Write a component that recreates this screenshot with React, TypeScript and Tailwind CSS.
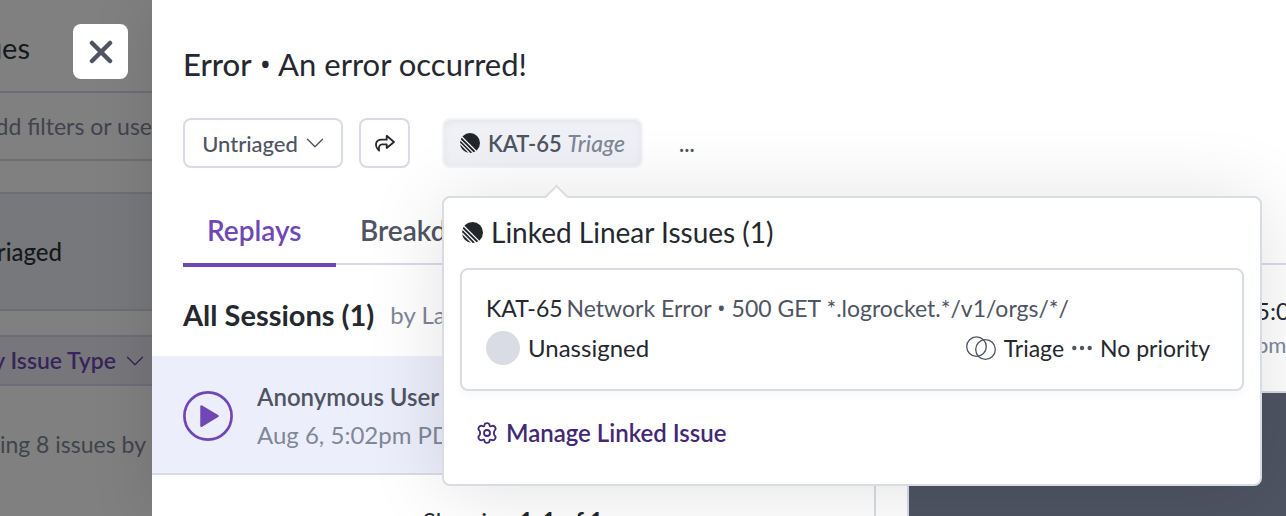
import type { ReactNode } from "react";

const LINKED_ISSUES = [
  {
    key: "KAT-65",
    kind: "Network Error",
    request: "500 GET *.logrocket.*/v1/orgs/*/",
    assignee: "Unassigned",
    status: "Triage",
    priority: "No priority",
  },
];

function LinearLogo({ className }: { className?: string }) {
  return (
    <svg viewBox="0 0 20 20" className={className} fill="none">
      <circle cx="10" cy="10" r="10" fill="#222529" />
      <path d="m2 4 14 14M.2 6.6 13.400 19.800M0 10.5 9.500 20" stroke="white" strokeWidth={1.2} />
    </svg>
  );
}

function ChevronDown({ className }: { className?: string }) {
  return (
    <svg viewBox="0 0 18 12" className={className} fill="none" stroke="currentColor" strokeWidth={1.4} strokeLinecap="round" strokeLinejoin="round">
      <path d="M1.5 2.2 9 9.8l7.5-7.6" />
    </svg>
  );
}

function ShareArrow() {
  return (
    <svg viewBox="0 0 22 20" className="h-5 w-[22px]" fill="none" stroke="currentColor" strokeWidth={1.8} strokeLinecap="round" strokeLinejoin="round">
      <path d="M12.7 2.8 20 9l-7.3 6v-3.6H8.5c-3 0-4.2 2.4-3.400 6.300C.3 13.2 1 6.7 7.8 6.7h4.9V2.8Z" />
    </svg>
  );
}

function PlayCircle() {
  return (
    <svg viewBox="0 0 50 50" className="size-[50px]" fill="none">
      <circle cx="25" cy="25" r="23.6" stroke="currentColor" strokeWidth={2.7} />
      <path d="M18.5 15.5 34.5 25l-16 9.8Z" fill="currentColor" stroke="currentColor" strokeWidth={2.5} strokeLinejoin="round" />
    </svg>
  );
}

function StatusRings() {
  return (
    <svg viewBox="0 0 30 24" className="h-6 w-[30px] shrink-0" fill="none" stroke="#4f5463" strokeWidth={1.3}>
      <circle cx="10.5" cy="10.6" r="9.8" />
      <circle cx="19.5" cy="13.5" r="9.8" />
    </svg>
  );
}

function Gear() {
  return (
    <svg viewBox="0 0 22 22" className="size-[22px] shrink-0" fill="none" stroke="currentColor" strokeWidth={1.8} strokeLinejoin="round">
      <path d="M8.4 3.2C8.6 1.7 9.6 1.2 11 1.2s2.4.5 2.6 2l.2.9q.9.5 1.8-.1c1.4-.6 2.5-.3 3.4 1s.9 2.3-.2 3.3q-1 .9-.9 2.7-.1 1.8.9 2.7c1.1 1 1.1 2 .2 3.3s-2 1.6-3.4 1q-.9-.6-1.8-.1l-.2.9c-.2 1.5-1.2 2-2.6 2s-2.4-.5-2.6-2l-.2-.9q-.9-.5-1.8.1c-1.4.6-2.5.3-3.4-1s-.9-2.3.2-3.3q1-.9.9-2.7.1-1.8-.9-2.7C2.1 7.3 2.1 6.3 3 5s2-1.6 3.4-1q.9.6 1.8.1Z" />
      <circle cx="11" cy="11" r="3" />
    </svg>
  );
}

// Lato's own bullet is oversized
function Bullet() {
  return <span className="font-['Open_Sans']">•</span>;
}

function Sidebar() {
  return (
    <aside className="flex w-[152px] shrink-0 flex-col overflow-hidden bg-[#808080] whitespace-nowrap text-[#16181c]">
      <div className="flex h-[93px] shrink-0 border-b-2 border-[#6d6e73]">
        <h2 className="mt-[30px] flex w-[30px] justify-end text-[29px] leading-9">Issues</h2>
        <button aria-label="Close" className="relative z-20 mt-6 ml-[43px] flex size-[55px] items-center justify-center rounded-lg bg-white text-[#4f5463]">
          <svg viewBox="0 0 24 24" className="size-6" stroke="currentColor" strokeWidth={4.5} strokeLinecap="round">
            <path d="m3 3 18 18M21 3 3 21" />
          </svg>
        </button>
      </div>
      <div className="flex h-[68px] shrink-0 items-center justify-end border-b-2 border-[#6d6e73] text-[23px] text-[#40444d]">Add filters or use</div>
      <div className="mt-[31px] flex h-[119px] shrink-0 items-center border-y-2 border-[#6d6e73] bg-[#77787b]">
        <span className="flex w-[62px] justify-end text-2xl font-medium">Untriaged</span>
      </div>
      <div className="mt-6 flex h-[51px] shrink-0 items-center justify-end gap-2.5 border-y-2 border-[#6d6c7a] bg-[#77777b] pr-2 text-[23px] font-semibold text-[#38245a]">
        by Issue Type
        <ChevronDown className="h-3 w-[18px] shrink-0" />
      </div>
      <p className="mt-10 flex justify-end pr-1.5 text-[23px] leading-9 text-[#40444d]">Showing 8 issues by</p>
    </aside>
  );
}

function ActionButton({ label, className, children }: { label?: string; className: string; children: ReactNode }) {
  return (
    <button aria-label={label} className={`flex h-[50px] items-center justify-center rounded-lg border-2 ${className}`}>
      {children}
    </button>
  );
}

function LinkedIssuesPopover() {
  return (
    <section className="absolute top-full left-0 z-10 mt-7 w-[820px] rounded-lg border-2 border-[#d9dce5] bg-white px-4 pt-4 pb-[33px] text-[#25282f] shadow-[0_4px_80px_rgba(0,0,0,0.12)]">
      <span className="absolute -top-[10px] left-[104px] size-[17px] rotate-45 border-t-2 border-l-2 border-[#d9dce5] bg-white" />
      <h3 className="flex items-center gap-2 pl-0.5 text-[28px] leading-9">
        <LinearLogo className="size-[21px]" />
        Linked Linear Issues (1)
      </h3>
      {LINKED_ISSUES.map((issue) => (
        <article key={issue.key} className="mt-[18px] rounded-lg border-2 border-[#d9dce5] px-6 pt-5 pb-[23px] text-2xl leading-9 shadow-[0_4px_8px_rgba(0,0,0,0.03)]">
          <p className="flex gap-1 text-[23px]">
            <span>{issue.key}</span>
            <span className="text-[#4f5463]">{issue.kind} <Bullet /> {issue.request}</span>
          </p>
          <div className="mt-1 flex items-center gap-2 pr-2">
            <span className="size-[34px] rounded-full bg-[#d9dce5]" />
            {issue.assignee}
            <span className="ml-auto flex items-center gap-2 text-[23px]">
              <StatusRings />
              {issue.status}
              <svg viewBox="0 0 20 6" className="h-1.5 w-5" fill="#4f5463">
                <circle cx="2.3" cy="3" r="2.2" />
                <circle cx="10" cy="3" r="2.2" />
                <circle cx="17.7" cy="3" r="2.2" />
              </svg>
              {issue.priority}
            </span>
          </div>
        </article>
      ))}
      <button className="mt-6 ml-4 flex items-center gap-2 text-2xl leading-9 font-semibold text-[#432874]">
        <Gear />
        Manage Linked Issue
      </button>
    </section>
  );
}

export default function App() {
  return (
    <div className="flex h-screen overflow-hidden font-[Lato,sans-serif]">
      <Sidebar />
      <main className="relative z-10 flex min-w-0 flex-1 flex-col bg-white text-[#25282f] shadow-[0_0_60px_rgba(0,0,0,0.12)]">
        <header className="pt-11 pl-[31px]">
          <h1 className="text-[31px] leading-10"><span className="font-medium">Error</span> <Bullet /> An error occurred!</h1>
          <div className="mt-[34px] flex items-center gap-4">
            <ActionButton className="w-40 gap-2 border-[#d9dce5] text-[22px] font-medium text-[#4f5463]">
              Untriaged
              <ChevronDown className="h-3 w-[18px]" />
            </ActionButton>
            <ActionButton label="Share" className="w-[51px] border-[#d9dce5]">
              <ShareArrow />
            </ActionButton>
            <div className="relative ml-4">
              <ActionButton className="w-[201px] gap-2 border-[#f3f4f7] bg-[#f0f1f6] text-[22px] font-semibold text-[#4f5463] shadow-[inset_0_2px_8px_rgba(0,0,0,0.05)]">
                <LinearLogo className="size-5" />
                <span>KAT-65 <em className="text-[23px] font-medium text-[#7f8798]">Triage</em></span>
              </ActionButton>
              <LinkedIssuesPopover />
            </div>
            <button aria-label="More actions" className="ml-5 text-[22px] font-semibold text-[#4f5463]">...</button>
          </div>
        </header>
        <nav className="mt-6 ml-[31px] flex h-[73px] shrink-0 border-b-2 border-[#d9dce5] text-[28px] font-semibold text-[#4f5463]">
          <button className="-mb-1 w-[153px] border-b-4 border-[#6f48b5] px-6 pt-1 text-left text-[#6f48b5]">Replays</button>
          <button className="px-6 pt-1">Breakdown</button>
        </nav>
        <div className="flex min-h-0 flex-1">
          <section className="flex w-[724px] shrink-0 flex-col border-r-2 border-[#d9dce5]">
            <h2 className="flex h-[91px] shrink-0 items-center gap-4 pt-2 pl-[31px] text-[29px] font-bold">
              All Sessions (1)
              <span className="text-2xl font-normal text-[#7f8798]">by Last Seen</span>
            </h2>
            <div className="flex h-[119px] shrink-0 items-center gap-6 border-b-2 border-[#d9dce5] bg-[#eceefc] pt-0.5 pl-[31px] text-[#6f48b5]">
              <button aria-label="Play session"><PlayCircle /></button>
              <div className="text-2xl leading-[38px]">
                <p className="font-semibold text-[#4f5463]">Anonymous User</p>
                <p className="text-[#7f8798]">Aug 6, 5:02pm PDT</p>
              </div>
            </div>
            <p className="mt-7 text-center text-2xl leading-9">Showing <b>1-1 of 1</b></p>
          </section>
          <section className="flex min-w-0 flex-1 flex-col overflow-hidden pl-[31px]">
            <div className="h-[126px] shrink-0 pt-7 pl-[349px] text-2xl leading-9 whitespace-nowrap">
              <p>5:02</p>
              <p className="text-[22px] leading-8 text-[#7f8798]">pm PDT</p>
            </div>
            <div className="flex-1 border-t-2 border-l-2 border-[#d9dce5] bg-[#4f5463]" />
          </section>
        </div>
      </main>
    </div>
  );
}
